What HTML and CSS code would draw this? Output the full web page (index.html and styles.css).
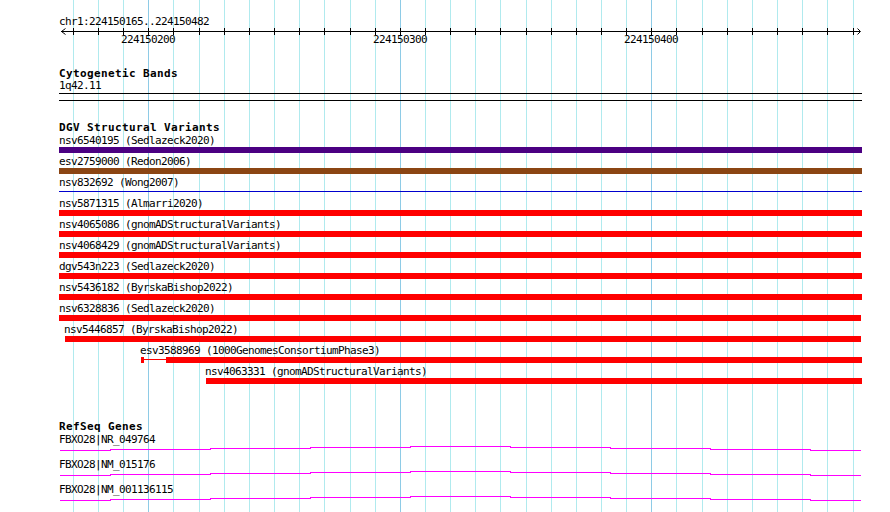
FILE: index.html
```html
<!DOCTYPE html>
<html lang="en">
<head>
    <meta charset="UTF-8">
    <title>Genome Browser - chr1:224150165..224150482</title>
    <link rel="stylesheet" href="styles.css">
</head>
<body>
<div class="browser">
    <!-- vertical grid, one line every 10 bp -->
    <svg class="grid" width="890" height="512" shape-rendering="crispEdges">
        <rect x="73" width="1" height="512"/>
        <rect x="98" width="1" height="512"/>
        <rect x="123" width="1" height="512"/>
        <rect class="major" x="148" width="1" height="512"/>
        <rect x="173" width="1" height="512"/>
        <rect x="199" width="1" height="512"/>
        <rect x="224" width="1" height="512"/>
        <rect x="249" width="1" height="512"/>
        <rect x="274" width="1" height="512"/>
        <rect x="299" width="1" height="512"/>
        <rect x="324" width="1" height="512"/>
        <rect x="350" width="1" height="512"/>
        <rect x="375" width="1" height="512"/>
        <rect class="major" x="400" width="1" height="512"/>
        <rect x="425" width="1" height="512"/>
        <rect x="450" width="1" height="512"/>
        <rect x="475" width="1" height="512"/>
        <rect x="500" width="1" height="512"/>
        <rect x="526" width="1" height="512"/>
        <rect x="551" width="1" height="512"/>
        <rect x="576" width="1" height="512"/>
        <rect x="601" width="1" height="512"/>
        <rect x="626" width="1" height="512"/>
        <rect class="major" x="651" width="1" height="512"/>
        <rect x="676" width="1" height="512"/>
        <rect x="702" width="1" height="512"/>
        <rect x="727" width="1" height="512"/>
        <rect x="752" width="1" height="512"/>
        <rect x="777" width="1" height="512"/>
        <rect x="802" width="1" height="512"/>
        <rect x="827" width="1" height="512"/>
        <rect x="853" width="1" height="512"/>
    </svg>

    <div class="tracks">
        <section class="ruler">
            <div class="label">chr1:224150165..224150482</div>
            <svg class="axis" width="803" height="18" shape-rendering="crispEdges">
                <path d="M2 3.5H801"/>
                <path d="M6.5 0.5L2.5 3.5L6.5 6.5" shape-rendering="auto"/>
                <path d="M798.5 0.5L801.5 3.5L798.5 6.5" shape-rendering="auto"/>
                <path d="M14.5 0V7M39.5 0V7M64.5 0V7M89.5 0V7M114.5 0V7M140.5 0V7M165.5 0V7M190.5 0V7M215.5 0V7M240.5 0V7M265.5 0V7M291.5 0V7M316.5 0V7M341.5 0V7M366.5 0V7M391.5 0V7M416.5 0V7M441.5 0V7M467.5 0V7M492.5 0V7M517.5 0V7M542.5 0V7M567.5 0V7M592.5 0V7M617.5 0V7M643.5 0V7M668.5 0V7M693.5 0V7M718.5 0V7M743.5 0V7M768.5 0V7M794.5 0V7"/>
                <text x="89" y="15">224150200</text>
                <text x="341" y="15">224150300</text>
                <text x="592" y="15">224150400</text>
            </svg>
        </section>

        <section class="track cyto">
            <h2 class="track-title">Cytogenetic Bands</h2>
            <div class="label">1q42.11</div>
            <div class="band"></div>
        </section>

        <section class="track dgv">
            <h2 class="track-title">DGV Structural Variants</h2>
            <div class="features">
                <div class="variant">
                    <div class="label">nsv6540195 (Sedlazeck2020)</div>
                    <div class="glyph"><div class="bar indigo" style="width:803px"></div></div>
                </div>
                <div class="variant">
                    <div class="label">esv2759000 (Redon2006)</div>
                    <div class="glyph"><div class="bar brown" style="width:803px"></div></div>
                </div>
                <div class="variant">
                    <div class="label">nsv832692 (Wong2007)</div>
                    <div class="glyph"><div class="line blue" style="width:803px"></div></div>
                </div>
                <div class="variant">
                    <div class="label">nsv5871315 (Almarri2020)</div>
                    <div class="glyph"><div class="bar red" style="width:803px"></div></div>
                </div>
                <div class="variant">
                    <div class="label">nsv4065086 (gnomADStructuralVariants)</div>
                    <div class="glyph"><div class="bar red" style="width:803px"></div></div>
                </div>
                <div class="variant">
                    <div class="label">nsv4068429 (gnomADStructuralVariants)</div>
                    <div class="glyph"><div class="bar red" style="width:802px"></div></div>
                </div>
                <div class="variant">
                    <div class="label">dgv543n223 (Sedlazeck2020)</div>
                    <div class="glyph"><div class="bar red" style="width:803px"></div></div>
                </div>
                <div class="variant">
                    <div class="label">nsv5436182 (ByrskaBishop2022)</div>
                    <div class="glyph"><div class="bar red" style="width:803px"></div></div>
                </div>
                <div class="variant">
                    <div class="label">nsv6328836 (Sedlazeck2020)</div>
                    <div class="glyph"><div class="bar red" style="width:802px"></div></div>
                </div>
                <div class="variant">
                    <div class="label" style="padding-left:5px">nsv5446857 (ByrskaBishop2022)</div>
                    <div class="glyph"><div class="bar red" style="margin-left:6px;width:796px"></div></div>
                </div>
                <div class="variant">
                    <div class="label" style="padding-left:81px">esv3588969 (1000GenomesConsortiumPhase3)</div>
                    <div class="glyph">
                        <div class="bar red" style="margin-left:82px;width:3px"></div>
                        <div class="line red" style="width:22px"></div>
                        <div class="bar red" style="width:696px"></div>
                    </div>
                </div>
                <div class="variant">
                    <div class="label" style="padding-left:146px">nsv4063331 (gnomADStructuralVariants)</div>
                    <div class="glyph"><div class="bar red" style="margin-left:147px;width:656px"></div></div>
                </div>
            </div>
        </section>

        <section class="track refseq">
            <h2 class="track-title">RefSeq Genes</h2>
            <div class="features">
                <div class="gene">
                    <div class="label">FBXO28|NR_049764</div>
                    <svg width="803" height="13" shape-rendering="crispEdges"><path d="M1 4.5H51V3.5H151V2.5H251V1.5H351V0.5H451V1.5H551V2.5H651V3.5H751V4.5H802"/></svg>
                </div>
                <div class="gene">
                    <div class="label">FBXO28|NM_015176</div>
                    <svg width="803" height="13" shape-rendering="crispEdges"><path d="M1 4.5H51V3.5H151V2.5H251V1.5H351V0.5H451V1.5H551V2.5H651V3.5H751V4.5H802"/></svg>
                </div>
                <div class="gene">
                    <div class="label">FBXO28|NM_001136115</div>
                    <svg width="803" height="13" shape-rendering="crispEdges"><path d="M1 4.5H51V3.5H151V2.5H251V1.5H351V0.5H451V1.5H551V2.5H651V3.5H751V4.5H802"/></svg>
                </div>
            </div>
        </section>
    </div>
</div>
</body>
</html>
```

FILE: styles.css
```css
* {
    box-sizing: border-box;
}
body {
    margin: 0;
    background-color: #ffffff;
    color: #000;
    font-family: "DejaVu Sans Mono", "Liberation Mono", monospace;
    font-size: 11px;
    line-height: 12px;
    letter-spacing: -0.62px;
}
.browser {
    position: relative;
    width: 890px;
    height: 512px;
    overflow: hidden;
}
.grid {
    position: absolute;
    top: 0;
    left: 0;
}
.grid rect {
    fill: #b0eaee;
}
.grid rect.major {
    fill: #8ecbe6;
}
.tracks {
    position: relative;
    margin-left: 59px;
    width: 803px;
    padding-top: 16px;
}
.label {
    height: 12px;
    white-space: nowrap;
}
.axis {
    display: block;
    overflow: visible;
}
.axis path {
    fill: none;
    stroke: #000;
    stroke-width: 1;
}
.axis text {
    font-family: "DejaVu Sans Mono", "Liberation Mono", monospace;
    font-size: 11px;
    letter-spacing: -0.62px;
    text-anchor: middle;
    fill: #000;
}
.track-title {
    margin: 0;
    height: 12px;
    font-size: 11px;
    line-height: 12px;
    font-weight: bold;
    letter-spacing: 0.38px;
    white-space: nowrap;
}
.cyto {
    margin-top: 22px;
}
.band {
    margin-top: 1px;
    height: 8px;
    border-top: 1px solid #000;
    border-bottom: 1px solid #000;
}
.dgv {
    margin-top: 21px;
}
.features {
    margin-top: 1px;
}
.dgv .features {
    display: flex;
    flex-direction: column;
    gap: 3px;
}
.glyph {
    display: flex;
    height: 6px;
}
.bar {
    height: 6px;
    flex: none;
}
.line {
    height: 1px;
    margin-top: 2px;
    flex: none;
}
.indigo {
    background-color: #4b0082;
}
.brown {
    background-color: #8b4513;
}
.blue {
    background-color: #0000cd;
}
.red {
    background-color: #ff0000;
}
.refseq {
    margin-top: 37px;
}
.gene svg {
    display: block;
}
.gene path {
    fill: none;
    stroke: #ff00ff;
    stroke-width: 1;
}
```
